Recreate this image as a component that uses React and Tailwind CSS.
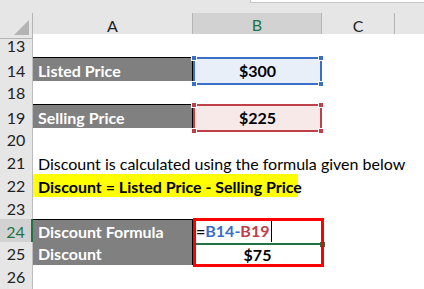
import React from 'react';

const COLS = 'grid grid-cols-[33px_160px_129px_73px_1fr]';

function Handle({ className, color }) {
    return <span className={`absolute w-[6px] h-[6px] border border-white ${color} ${className}`} />;
}

function RowNum({ n, active }) {
    return (
        <div
            className={`flex items-center justify-center border-b border-r text-[16px] ${
                active
                    ? 'bg-[#d2d2d2] text-[#217346] border-r-[#217346] border-r-2 border-b-[#b9b9b9]'
                    : 'bg-[#e6e6e6] text-[#222] border-[#bdbdbd]'
            }`}
        >
            {n}
        </div>
    );
}

function Row({ n, h, active, children }) {
    return (
        <div className={`${COLS} ${h}`}>
            <RowNum n={n} active={active} />
            {children}
        </div>
    );
}

function Label({ children, top = true }) {
    return (
        <div className={`bg-[#808080] text-white font-bold text-[16px] flex items-center pl-[5px] border-black border-b border-r ${top ? 'border-t' : ''}`}>
            {children}
        </div>
    );
}

function Empty() {
    return <div className="bg-white" />;
}

export default function App() {
    return (
        <div className="w-[424px] h-[289px] overflow-hidden bg-white font-['Lato','Liberation_Sans',sans-serif] relative">
            {/* top strip */}
            <div className="h-[13px] bg-[#e6e6e6] relative">
                <div className="absolute left-[250px] right-0 top-0 h-[3px] bg-white border-b border-l border-[#c6c6c6]" />
            </div>

            {/* column headers */}
            <div className={`${COLS} h-[21px] text-[16px]`}>
                <div className="bg-[#e6e6e6] border-b border-r border-[#b5b5b5] relative">
                    <svg className="absolute right-[3px] bottom-[3px]" width="15" height="15" viewBox="0 0 15 15">
                        <polygon points="15,0 15,15 0,15" fill="#b4b4b4" />
                    </svg>
                </div>
                <div className="bg-[#e6e6e6] border-b border-r border-[#b5b5b5] flex items-center justify-center text-[#222]">A</div>
                <div className="bg-[#d2d2d2] border-b-2 border-b-[#217346] border-r border-r-[#b5b5b5] flex items-center justify-center text-[#217346]">B</div>
                <div className="bg-[#e6e6e6] border-b border-r border-[#b5b5b5] flex items-center justify-center text-[#222]">C</div>
                <div className="bg-[#e6e6e6] border-b border-[#b5b5b5]" />
            </div>

            <Row n="13" h="h-[23px]"><Empty /><Empty /><Empty /><Empty /></Row>

            <Row n="14" h="h-[24px]">
                <Label>Listed Price</Label>
                <div className="relative bg-[#e8eff9] border-2 border-[#3a6fc7] flex items-center justify-center font-bold text-[16px] text-black">
                    $300
                    <Handle color="bg-[#3a6fc7]" className="-left-[4px] -top-[4px]" />
                    <Handle color="bg-[#3a6fc7]" className="-right-[4px] -top-[4px]" />
                    <Handle color="bg-[#3a6fc7]" className="-left-[4px] -bottom-[4px]" />
                    <Handle color="bg-[#3a6fc7]" className="-right-[4px] -bottom-[4px]" />
                </div>
                <Empty /><Empty />
            </Row>

            <Row n="18" h="h-[23px]"><Empty /><Empty /><Empty /><Empty /></Row>

            <Row n="19" h="h-[24px]">
                <Label>Selling Price</Label>
                <div className="relative bg-[#f8e9e9] border-2 border-[#c0404a] flex items-center justify-center font-bold text-[16px] text-black">
                    $225
                    <Handle color="bg-[#c0404a]" className="-left-[4px] -top-[4px]" />
                    <Handle color="bg-[#c0404a]" className="-right-[4px] -top-[4px]" />
                    <Handle color="bg-[#c0404a]" className="-left-[4px] -bottom-[4px]" />
                    <Handle color="bg-[#c0404a]" className="-right-[4px] -bottom-[4px]" />
                </div>
                <Empty /><Empty />
            </Row>

            <Row n="20" h="h-[23px]"><Empty /><Empty /><Empty /><Empty /></Row>

            <Row n="21" h="h-[23px]">
                <div className="col-span-4 flex items-center pl-[5px] text-[16px] text-black whitespace-nowrap">
                    Discount is calculated using the formula given below
                </div>
            </Row>

            <Row n="22" h="h-[23px]">
                <div className="col-span-4 flex items-center">
                    <div className="h-full w-[265px] bg-[#ffff00] flex items-center pl-[5px] text-[16px] font-bold text-black whitespace-nowrap">
                        Discount = Listed Price - Selling Price
                    </div>
                </div>
            </Row>

            <Row n="23" h="h-[22px]"><Empty /><Empty /><Empty /><Empty /></Row>

            <Row n="24" h="h-[23px]" active>
                <Label>Discount Formula</Label>
                <div className="relative border-b-2 border-[#217346] flex items-center pl-[3px] font-bold text-[16px]">
                    <span className="text-black">=</span>
                    <span className="text-[#3a6fc7]">B14</span>
                    <span className="text-[#3a6fc7]">-</span>
                    <span className="text-[#c0404a]">B19</span>
                    <span className="ml-[2px] w-px h-[21px] bg-black" />
                    <span className="absolute -right-[3px] -bottom-[4px] w-[5px] h-[5px] bg-[#217346]" />
                </div>
                <Empty /><Empty />
            </Row>

            <Row n="25" h="h-[23px]">
                <Label top={false}>Discount</Label>
                <div className="flex items-center justify-center font-bold text-[16px] text-black">$75</div>
                <Empty /><Empty />
            </Row>

            <Row n="26" h="h-[24px]"><Empty /><Empty /><Empty /><Empty /></Row>

            {/* red highlight box over B24:B25 */}
            <div className="absolute left-[193px] top-[218px] w-[131px] h-[49px] border-[3px] border-[#ff0000] pointer-events-none" />
        </div>
    );
}
